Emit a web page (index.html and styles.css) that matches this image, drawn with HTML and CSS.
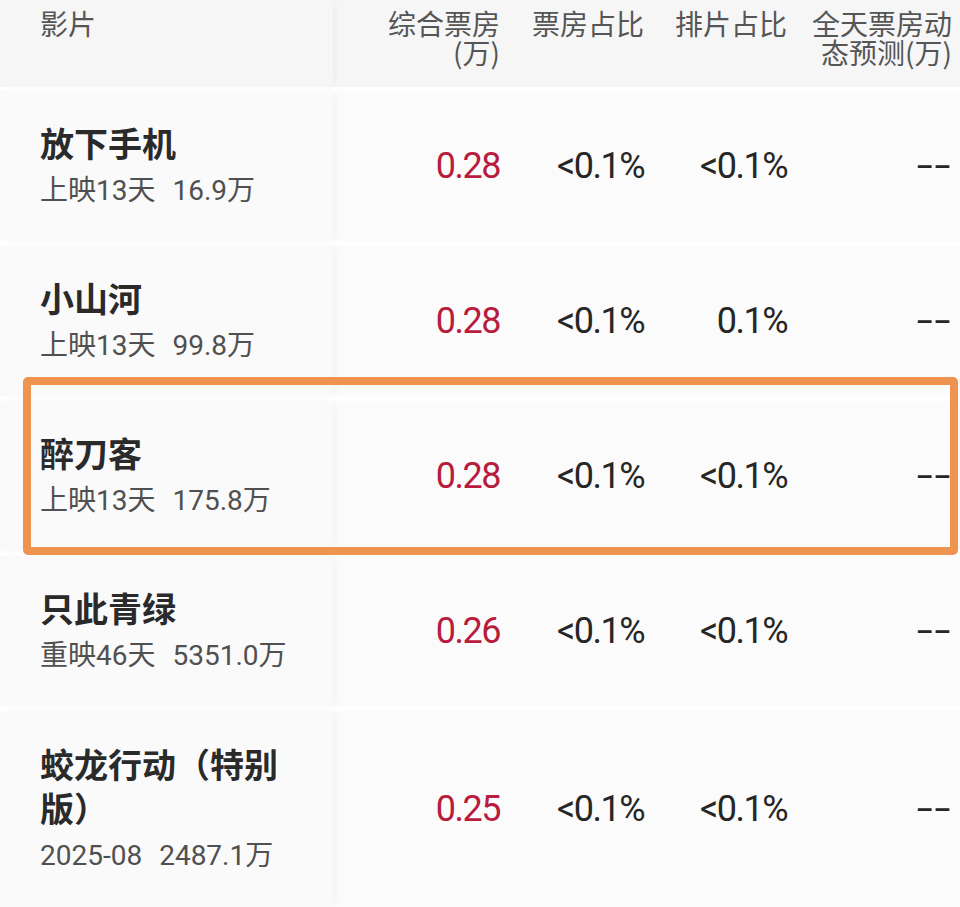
FILE: index.html
```html
<!DOCTYPE html>
<html lang="zh-CN">
<head>
<meta charset="utf-8">
<title>票房</title>
<link rel="stylesheet" href="styles.css">
</head>
<body>
<div class="page">
  <div class="table">
    <div class="row head">
      <div class="cell name">影片</div>
      <div class="cell num c1">综合票房(万)</div>
      <div class="cell num c2">票房占比</div>
      <div class="cell num c3">排片占比</div>
      <div class="cell num c4">全天票房动态预测(万)</div>
    </div>
    <div class="row">
      <div class="cell name"><div class="title">放下手机</div><div class="sub">上映13天<span class="amt">16.9万</span></div></div>
      <div class="cell num c1 red">0.28</div>
      <div class="cell num c2">&lt;0.1%</div>
      <div class="cell num c3">&lt;0.1%</div>
      <div class="cell num c4"><span class="dash">--</span></div>
    </div>
    <div class="row">
      <div class="cell name"><div class="title">小山河</div><div class="sub">上映13天<span class="amt">99.8万</span></div></div>
      <div class="cell num c1 red">0.28</div>
      <div class="cell num c2">&lt;0.1%</div>
      <div class="cell num c3">0.1%</div>
      <div class="cell num c4"><span class="dash">--</span></div>
    </div>
    <div class="row">
      <div class="cell name"><div class="title">醉刀客</div><div class="sub">上映13天<span class="amt">175.8万</span></div></div>
      <div class="cell num c1 red">0.28</div>
      <div class="cell num c2">&lt;0.1%</div>
      <div class="cell num c3">&lt;0.1%</div>
      <div class="cell num c4"><span class="dash">--</span></div>
    </div>
    <div class="row">
      <div class="cell name"><div class="title">只此青绿</div><div class="sub">重映46天<span class="amt">5351.0万</span></div></div>
      <div class="cell num c1 red">0.26</div>
      <div class="cell num c2">&lt;0.1%</div>
      <div class="cell num c3">&lt;0.1%</div>
      <div class="cell num c4"><span class="dash">--</span></div>
    </div>
    <div class="row tall">
      <div class="cell name"><div class="title">蛟龙行动（特别版）</div><div class="sub">2025-08<span class="amt">2487.1万</span></div></div>
      <div class="cell num c1 red">0.25</div>
      <div class="cell num c2">&lt;0.1%</div>
      <div class="cell num c3">&lt;0.1%</div>
      <div class="cell num c4"><span class="dash">--</span></div>
    </div>
  </div>
  <div class="highlight"></div>
</div>
</body>
</html>
```

FILE: styles.css
```css
html, body {
  margin: 0;
  padding: 0;
  background: #ffffff;
}
body {
  font-family: "Noto Sans CJK SC", "Noto Sans", sans-serif;
  color: #222222;
  overflow: hidden;
}
.page {
  position: relative;
  width: 960px;
  height: 907px;
  overflow: hidden;
}
.table {
  display: flex;
  flex-direction: column;
  gap: 5px;
}
.row {
  display: grid;
  grid-template-columns: 333px 175px 144px 143px 165px;
  height: 150px;
  background: #fbfbfb;
}
.row.head {
  height: 87px;
  margin-bottom: -1px;
  background: #f6f6f6;
}
.row.tall {
  height: 196px;
}
.cell {
  box-sizing: border-box;
}
.name {
  position: relative;
  z-index: 1;
  padding: 0 40px 0 40px;
  display: flex;
  flex-direction: column;
  justify-content: center;
  gap: 6px;
  background: #fafafa;
  box-shadow: 3px 0 7px -2px rgba(0, 0, 0, 0.05);
}
.head .cell {
  font-size: 28px;
  line-height: 29px;
  color: #555555;
  padding-top: 9px;
  justify-content: flex-start;
}
.head .name {
  background: #f6f6f6;
}
.title {
  font-size: 34px;
  line-height: 44px;
  font-weight: 700;
  color: #2a2a2a;
}
.sub {
  font-family: "Roboto", "Noto Sans CJK SC", sans-serif;
  font-size: 28px;
  line-height: 40px;
  color: #505050;
  white-space: nowrap;
}
.amt {
  margin-left: 17px;
}
.num {
  display: flex;
  align-items: center;
  justify-content: flex-end;
  text-align: right;
  padding: 0 8px 0 20px;
  font-family: "Roboto", "Noto Sans", sans-serif;
  font-size: 36px;
  letter-spacing: -1.5px;
  color: #262626;
}
.head .num {
  display: block;
  font-family: "Noto Sans CJK SC", sans-serif;
  letter-spacing: 0;
}
.head .c1 {
  padding-left: 40px;
}
.head .c4 {
  padding-left: 8px;
}
.red {
  color: #b81c3e;
}
.dash {
  display: inline-block;
  transform: scaleX(1.6);
  transform-origin: right center;
  letter-spacing: 1px;
}
.highlight {
  position: absolute;
  left: 23px;
  top: 377px;
  width: 935px;
  height: 178px;
  box-sizing: border-box;
  border: 8px solid #ee9350;
  border-radius: 5px;
  z-index: 2;
}
```
